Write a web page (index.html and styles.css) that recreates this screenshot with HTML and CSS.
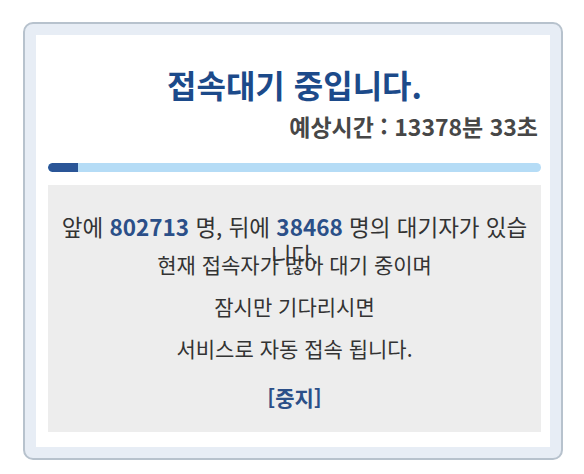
FILE: index.html
```html
<!DOCTYPE html>
<html lang="ko">
<head>
  <meta charset="UTF-8" />
  <meta name="viewport" content="width=device-width, initial-scale=1.0"/>
  <title>접속대기</title>
  <link rel="stylesheet" href="styles.css">
</head>
<body>
  <div class="frame">
    <div class="panel">
      <h1 class="title">접속대기 중입니다.</h1>
      <div class="eta">예상시간 : 13378분 33초</div>
      <div class="progress"><div class="progress-fill" style="width: 6%"></div></div>

      <div class="queue-box">
        <p class="queue-count">앞에 <b>802713</b> 명, 뒤에 <b>38468</b> 명의 대기자가 있습니다.</p>
        <p class="queue-msg">현재 접속자가 많아 대기 중이며<br>잠시만 기다리시면<br>서비스로 자동 접속 됩니다.</p>
        <a class="stop-link" href="#">[중지]</a>
      </div>
    </div>
  </div>
</body>
</html>
```

FILE: styles.css
```css
body {
  margin: 0;
  padding: 22px 21px 0 23px;
  background: #fff;
  font-family: "Noto Sans CJK KR", "Noto Sans", sans-serif;
  color: #333;
}

.frame {
  border: 2px solid #b7c2cd;
  border-radius: 10px;
  background: #e7edf5;
  padding: 11px;
}

.panel {
  background: #fff;
  padding: 28px 9px 15px 12px;
}

.title {
  margin: 0;
  text-align: center;
  font-size: 32px;
  line-height: 42px;
  font-weight: bold;
  color: #1c4a8a;
}

.eta {
  margin-top: 5px;
  text-align: right;
  padding-right: 3px;
  font-size: 23px;
  line-height: 32px;
  font-weight: bold;
  color: #474747;
}

.progress {
  margin-top: 21px;
  height: 9px;
  border-radius: 5px;
  background: #b5dcf6;
  overflow: hidden;
}

.progress-fill {
  height: 100%;
  background: #2a5597;
  border-radius: 5px 0 0 5px;
}

.queue-box {
  margin-top: 13px;
  background: #ededed;
  padding: 27px 8px 20px;
  text-align: center;
}

.queue-count {
  margin: 0;
  height: 28px;
  font-size: 22.5px;
  line-height: 28px;
}

.queue-count b {
  color: #2b4f88;
  font-weight: bold;
}

.queue-msg {
  margin: 3px 0 0;
  font-size: 21px;
  line-height: 42px;
}

.stop-link {
  display: block;
  margin-top: 13px;
  font-size: 21px;
  line-height: 30px;
  font-weight: bold;
  color: #2b4f88;
  text-decoration: none;
}
```
